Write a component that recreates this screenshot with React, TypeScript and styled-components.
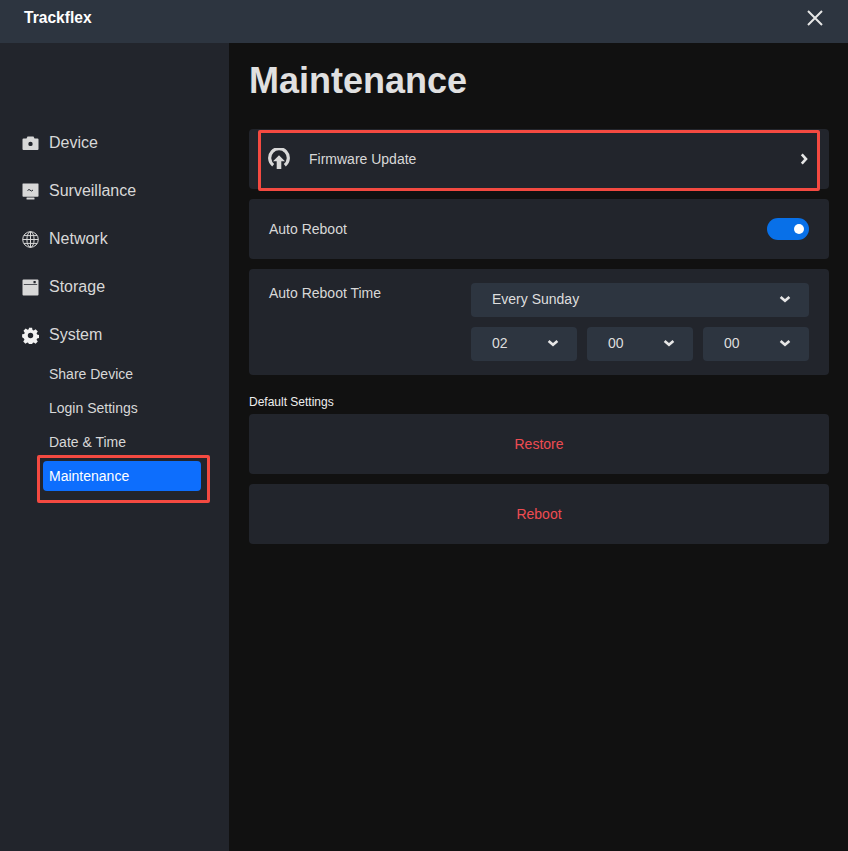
import React from 'react';
import styled, { createGlobalStyle } from 'styled-components';

const GlobalStyle = createGlobalStyle`
  html, body {
    margin: 0;
    padding: 0;
    background: #111111;
    font-family: 'Liberation Sans', Arial, sans-serif;
  }
  * {
    box-sizing: border-box;
  }
`;

const Page = styled.div`
  width: 848px;
  height: 851px;
  display: flex;
  flex-direction: column;
  overflow: hidden;
`;

const TitleBar = styled.header`
  height: 43px;
  flex: none;
  background: #2d3540;
  display: flex;
  align-items: center;
  justify-content: space-between;
  padding: 0 24px 7px 24px;
`;

const AppName = styled.div`
  font-size: 15.6px;
  font-weight: 700;
  color: #ffffff;
`;

const CloseButton = styled.button`
  border: 0;
  padding: 0;
  background: none;
  display: flex;
`;

const Body = styled.div`
  flex: 1;
  display: flex;
  min-height: 0;
`;

const Sidebar = styled.nav`
  width: 229px;
  flex: none;
  background: #22252c;
  padding-top: 76px;
`;

const NavItem = styled.div`
  height: 48px;
  padding-left: 22px;
  display: flex;
  align-items: center;
  gap: 10px;
  font-size: 16px;
  color: #d8d8d8;
`;

const SubList = styled.div`
  margin: -2px 0 0 43px;
  width: 158px;
`;

const SubItem = styled.div<{ $active?: boolean }>`
  position: relative;
  height: 30px;
  margin: 2px 0 4px;
  padding-left: 6px;
  display: flex;
  align-items: center;
  font-size: 14px;
  border-radius: 4px;
  color: ${({ $active }) => ($active ? '#ffffff' : '#d8d8d8')};
  background: ${({ $active }) => ($active ? '#0d6efd' : 'transparent')};
`;

const Highlight = styled.span<{ $inset: string }>`
  position: absolute;
  inset: ${({ $inset }) => $inset};
  border: 3px solid #f44a41;
  border-radius: 2px;
  pointer-events: none;
`;

const Main = styled.main`
  flex: 1;
  padding: 0 19px 0 20px;
`;

const PageTitle = styled.h1`
  margin: 0;
  height: 86px;
  display: flex;
  align-items: center;
  padding-bottom: 11px;
  font-size: 36px;
  font-weight: 700;
  color: #e0e0e0;
`;

const Card = styled.section`
  position: relative;
  min-height: 60px;
  margin-bottom: 10px;
  padding: 0 20px;
  background: #22252c;
  border-radius: 4px;
  display: flex;
  align-items: center;
  font-size: 14px;
  color: #d8d8d8;
`;

const FirmwareCard = styled(Card)`
  padding-left: 19px;
`;

const FirmwareLabel = styled.span`
  margin-left: 19px;
  flex: 1;
`;

const RowLabel = styled.span`
  flex: 1;
`;

const Toggle = styled.div`
  width: 42px;
  height: 22px;
  border-radius: 11px;
  background: #0870e8;
  position: relative;

  &::after {
    content: '';
    position: absolute;
    top: 6px;
    right: 5px;
    width: 10px;
    height: 10px;
    border-radius: 50%;
    background: #ffffff;
  }
`;

const TimeCard = styled(Card)`
  height: 106px;
  align-items: flex-start;
  padding: 14px 20px 14px 20px;
`;

const TimeLabel = styled.div`
  width: 202px;
  padding-top: 2px;
`;

const TimeFields = styled.div`
  flex: 1;
  display: flex;
  flex-direction: column;
  gap: 10px;
`;

const TimeRow = styled.div`
  display: grid;
  grid-template-columns: repeat(3, 1fr);
  gap: 10px;
`;

const Select = styled.div`
  height: 34px;
  padding: 0 18px 2px 21px;
  background: #2d3540;
  border-radius: 4px;
  display: flex;
  align-items: center;
  justify-content: space-between;
  color: #dedede;
`;

const SectionLabel = styled.div`
  margin-top: 18px;
  height: 18px;
  margin-bottom: 3px;
  display: flex;
  align-items: center;
  font-size: 12px;
  color: #eeeeee;
`;

const ActionCard = styled(Card)`
  justify-content: center;
  color: #ee4c52;
`;

const Icon = styled.svg`
  flex: none;
  display: block;
`;

const iconFill = '#d8d8d8';

const CameraIcon = () => (
  <Icon width="17" height="17" viewBox="0 0 17 17">
    <path
      fill={iconFill}
      fillRule="evenodd"
      d="M1.5 3.5h3l1-2h6l1 2h3a1 1 0 0 1 1 1v9.5a1 1 0 0 1-1 1h-14a1 1 0 0 1-1-1v-9.5a1 1 0 0 1 1-1zM8.5 6.7a2.2 2.2 0 1 0 0 4.4 2.2 2.2 0 0 0 0-4.4z"
    />
  </Icon>
);

const MonitorIcon = () => (
  <Icon width="17" height="17" viewBox="0 0 17 17">
    <path fill={iconFill} d="M1 .5h15a.5.5 0 0 1 .5.5v12a.8.8 0 0 1-.8.8H1.3a.8.8 0 0 1-.8-.8V1A.5.5 0 0 1 1 .5z" />
    <rect x="4.5" y="14.5" width="8" height="2" rx=".5" fill={iconFill} />
    <path d="M5.5 7.5l1.5-1 2.5 1.5 1.5-1" fill="none" stroke="#22252c" strokeWidth="1" />
  </Icon>
);

const GlobeIcon = () => (
  <Icon width="17" height="17" viewBox="0 0 17 17" fill="none" stroke={iconFill} strokeWidth="1">
    <circle cx="8.5" cy="8.5" r="7.8" />
    <ellipse cx="8.5" cy="8.5" rx="3.6" ry="7.8" />
    <path d="M8.5.7v15.6M.7 8.5h15.6M1.8 4.6h13.4M1.8 12.4h13.4" />
  </Icon>
);

const StorageIcon = () => (
  <Icon width="17" height="17" viewBox="0 0 17 17">
    <path
      fill={iconFill}
      fillRule="evenodd"
      d="M1.5.5h14a1 1 0 0 1 1 1v14a1 1 0 0 1-1 1h-14a1 1 0 0 1-1-1v-14a1 1 0 0 1 1-1zM1.8 5.2v.9h13.4v-.9zM11.5 2v2.2h2.2V2z"
    />
  </Icon>
);

const GearIcon = () => (
  <Icon width="17" height="17" viewBox="0 0 24 24">
    <path
      fill="#f2f2f2"
      fillRule="evenodd"
      d="M9.6 0h4.8l.7 3.4 1.9.8 2.9-1.9 3.4 3.4-1.9 2.9.8 1.9 3.3.7v4.6l-3.3.7-.8 1.9 1.9 2.9-3.4 3.4-2.9-1.9-1.9.8-.7 3.3H9.6l-.7-3.3-1.9-.8-2.9 1.9-3.4-3.4 1.9-2.9-.8-1.9L-1 14.8v-4.6l3.2-.7.8-1.9-1.9-2.9 3.4-3.4 2.9 1.9 1.9-.8zM12 7.8a4.2 4.2 0 1 0 0 8.4 4.2 4.2 0 0 0 0-8.4z"
      transform="translate(1.1 1.1) scale(.91)"
    />
  </Icon>
);

const UploadIcon = () => (
  <Icon width="22" height="22" viewBox="0 0 22 22" fill="none">
    <path d="M5.2 17.2a9.3 9.3 0 1 1 11.6 0" stroke={iconFill} strokeWidth="3.2" />
    <path d="M11 7.2l6 6h-3.7V21H8.7v-7.8H5z" fill={iconFill} />
  </Icon>
);

const ChevronDown = () => (
  <Icon width="12" height="12" viewBox="0 0 12 12" fill="none">
    <path d="M1.6 4l4.4 3.8L10.4 4" stroke="#e6e6e6" strokeWidth="2.6" />
  </Icon>
);

const ChevronRight = () => (
  <Icon width="10" height="12" viewBox="0 0 10 12" fill="none">
    <path d="M2.8 1.4L7 6l-4.2 4.6" stroke="#e6e6e6" strokeWidth="2.6" />
  </Icon>
);

const CloseIcon = () => (
  <Icon width="18" height="18" viewBox="0 0 18 18" fill="none">
    <path d="M2 2l14 14M16 2L2 16" stroke="#e6e6e6" strokeWidth="2" />
  </Icon>
);

const navItems = [
  { label: 'Device', icon: <CameraIcon /> },
  { label: 'Surveillance', icon: <MonitorIcon /> },
  { label: 'Network', icon: <GlobeIcon /> },
  { label: 'Storage', icon: <StorageIcon /> },
  { label: 'System', icon: <GearIcon /> },
];

const subItems = ['Share Device', 'Login Settings', 'Date & Time'];
const timeValues = ['02', '00', '00'];

export default function App() {
  return (
    <Page>
      <GlobalStyle />
      <TitleBar>
        <AppName>Trackflex</AppName>
        <CloseButton aria-label="Close">
          <CloseIcon />
        </CloseButton>
      </TitleBar>
      <Body>
        <Sidebar>
          {navItems.map((item) => (
            <NavItem key={item.label}>
              {item.icon}
              {item.label}
            </NavItem>
          ))}
          <SubList>
            {subItems.map((label) => (
              <SubItem key={label}>{label}</SubItem>
            ))}
            <SubItem $active>
              Maintenance
              <Highlight $inset="-6px -9px -12px -6px" />
            </SubItem>
          </SubList>
        </Sidebar>
        <Main>
          <PageTitle>Maintenance</PageTitle>
          <FirmwareCard>
            <UploadIcon />
            <FirmwareLabel>Firmware Update</FirmwareLabel>
            <ChevronRight />
            <Highlight $inset="1px 9px -2px 9px" />
          </FirmwareCard>
          <Card>
            <RowLabel>Auto Reboot</RowLabel>
            <Toggle />
          </Card>
          <TimeCard>
            <TimeLabel>Auto Reboot Time</TimeLabel>
            <TimeFields>
              <Select>
                Every Sunday
                <ChevronDown />
              </Select>
              <TimeRow>
                {timeValues.map((value, index) => (
                  <Select key={index}>
                    {value}
                    <ChevronDown />
                  </Select>
                ))}
              </TimeRow>
            </TimeFields>
          </TimeCard>
          <SectionLabel>Default Settings</SectionLabel>
          <ActionCard>Restore</ActionCard>
          <ActionCard>Reboot</ActionCard>
        </Main>
      </Body>
    </Page>
  );
}
